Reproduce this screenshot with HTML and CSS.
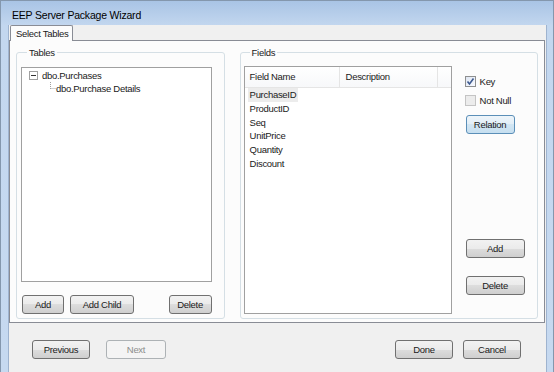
FILE: index.html
```html
<!DOCTYPE html>
<html lang="en">
<head>
    <meta charset="UTF-8">
    <meta name="viewport" content="width=device-width, initial-scale=1.0">
    <title>EEP Server Package Wizard</title>
    <link rel="stylesheet" href="styles.css">
</head>
<body>
    <div class="window">
        <div class="titlebar">EEP Server Package Wizard</div>

        <div class="client">
            <div class="tabstrip">
                <div class="tab">Select Tables</div>
            </div>

            <div class="tabpage">
                <!-- Tables group -->
                <fieldset class="group group-tables">
                    <legend>Tables</legend>
                    <div class="tree">
                        <div class="node">
                            <svg class="expander" width="9" height="9" viewBox="0 0 9 9">
                                <rect x="0.5" y="0.5" width="8" height="8" fill="#fff" stroke="#a0a0a0"/>
                                <line x1="2" y1="4.5" x2="7" y2="4.5" stroke="#333"/>
                            </svg>
                            <span>dbo.Purchases</span>
                        </div>
                        <div class="node child">
                            <svg class="branch" width="6" height="13" viewBox="0 0 6 13">
                                <line x1="0.5" y1="0" x2="0.5" y2="7" stroke="#a0a0a0" stroke-dasharray="1 1"/>
                                <line x1="0.5" y1="6.5" x2="6" y2="6.5" stroke="#a0a0a0" stroke-dasharray="1 1"/>
                            </svg>
                            <span>dbo.Purchase Details</span>
                        </div>
                    </div>
                    <div class="button-row">
                        <button class="btn btn-add">Add</button>
                        <button class="btn btn-child">Add Child</button>
                        <button class="btn btn-del">Delete</button>
                    </div>
                </fieldset>

                <!-- Fields group -->
                <fieldset class="group group-fields">
                    <legend>Fields</legend>
                    <div class="listview">
                        <div class="lv-header">
                            <span class="col col-name">Field Name</span>
                            <span class="col col-desc">Description</span>
                            <span class="col col-rest"></span>
                        </div>
                        <div class="lv-rows">
                            <div class="row"><span class="selected">PurchaseID</span></div>
                            <div class="row">ProductID</div>
                            <div class="row">Seq</div>
                            <div class="row">UnitPrice</div>
                            <div class="row">Quantity</div>
                            <div class="row">Discount</div>
                        </div>
                    </div>
                    <div class="side">
                        <label class="check">
                            <span class="box checked">
                                <svg width="9" height="9" viewBox="0 0 9 9">
                                    <path d="M1.5 4.5 L3.5 7 L7.5 1.5" fill="none" stroke="#3e5a8f" stroke-width="1.6"/>
                                </svg>
                            </span>
                            Key
                        </label>
                        <label class="check">
                            <span class="box disabled"></span>
                            Not Null
                        </label>
                        <button class="btn btn-side btn-default">Relation</button>
                        <button class="btn btn-side btn-side-add">Add</button>
                        <button class="btn btn-side btn-side-del">Delete</button>
                    </div>
                </fieldset>
            </div>

            <div class="footer">
                <button class="btn btn-nav">Previous</button>
                <button class="btn btn-nav btn-next" disabled>Next</button>
                <span class="spacer"></span>
                <button class="btn btn-nav">Done</button>
                <button class="btn btn-nav">Cancel</button>
            </div>
        </div>
    </div>
</body>
</html>
```

FILE: styles.css
```css
body {
    margin: 0;
    width: 554px;
    height: 372px;
    overflow: hidden;
    font-family: "Liberation Sans", Arial, sans-serif;
    font-size: 9.5px;
    letter-spacing: -0.3px;
    color: #1a1a1a;
}
.window {
    box-sizing: border-box;
    height: 372px;
    display: flex;
    flex-direction: column;
    padding: 0 6px 0 7px;
    border: 1px solid #8497ad;
    border-bottom: none;
    background: linear-gradient(#a9c4e5, #c3d7ef 25px, #c6d9f0);
}
.titlebar {
    height: 24px;
    line-height: 28px;
    padding-left: 4px;
    font-size: 10.5px;
    letter-spacing: -0.2px;
    color: #000;
}
.client {
    flex: 1;
    display: flex;
    flex-direction: column;
    background-color: #f0f0f0;
    border-left: 1px solid #9eb3cf;
    border-right: 1px solid #9eb3cf;
}
.tabstrip {
    height: 15px;
    display: flex;
    align-items: flex-end;
}
.tab {
    position: relative;
    box-sizing: border-box;
    height: 16px;
    width: 63px;
    margin: 0 0 -1px 1px;
    padding-left: 5px;
    line-height: 15px;
    white-space: nowrap;
    border: 1px solid #898c95;
    border-bottom: none;
    border-radius: 2px 2px 0 0;
    background-color: #fcfcfc;
}
.tabpage {
    box-sizing: border-box;
    height: 283px;
    display: flex;
    gap: 15px;
    padding: 5px 6px 3px 6px;
    margin-right: 1px;
    border: 1px solid #898c95;
    background-color: #fcfcfc;
}
.group {
    box-sizing: border-box;
    margin: 0;
    min-width: 0;
    display: flex;
    border: 1px solid #d5dfe5;
    border-radius: 3px;
}
.group legend {
    margin-left: 6px;
    padding: 0 2px;
    line-height: 13px;
}
.group-tables {
    width: 209px;
    flex-direction: column;
    padding: 8px 12px 4px 4px;
}
.group-fields {
    width: 299px;
    padding: 7px 12px 4px 3px;
}
.tree {
    flex: 1;
    border: 1px solid #a0a0a0;
    background-color: #fff;
    padding-top: 1px;
}
.node {
    display: flex;
    align-items: center;
    height: 13px;
    white-space: nowrap;
}
.expander {
    margin: 0 4px 0 7px;
}
.node.child {
    padding-left: 28px;
}
.branch {
    margin-right: 0;
    align-self: flex-start;
}
.button-row {
    display: flex;
    gap: 6px;
    margin-top: 13px;
    padding-left: 1px;
}
.btn {
    box-sizing: border-box;
    height: 19px;
    padding: 0;
    font-family: inherit;
    font-size: 9.5px;
    letter-spacing: -0.3px;
    color: #1a1a1a;
    border: 1px solid #707070;
    border-radius: 3px;
    background: linear-gradient(#f2f2f2, #ebebeb 50%, #dddddd 50%, #cfcfcf);
}
.btn-add {
    width: 42px;
}
.btn-child {
    width: 64px;
}
.btn-del {
    width: 43px;
    margin-left: auto;
}
.listview {
    width: 208px;
    box-sizing: border-box;
    display: flex;
    flex-direction: column;
    border: 1px solid #a0a0a0;
    background-color: #fff;
}
.lv-header {
    display: flex;
    height: 20px;
    line-height: 20px;
    border-bottom: 1px solid #e5e5e5;
    background: linear-gradient(#ffffff, #f7f8fa);
}
.col {
    box-sizing: border-box;
    border-right: 1px solid #e5e5e5;
}
.col-name {
    width: 95px;
    padding-left: 5px;
}
.col-desc {
    width: 98px;
    padding-left: 6px;
}
.col-rest {
    flex: 1;
    border-right: none;
}
.lv-rows {
    padding: 0 0 0 3px;
}
.row {
    height: 13.75px;
    line-height: 13.75px;
    padding-left: 2px;
}
.selected {
    display: inline-block;
    margin-left: -2px;
    padding: 0 2px;
    background-color: #ececec;
}
.side {
    flex: 1;
    display: flex;
    flex-direction: column;
    align-items: flex-start;
    padding: 9px 0 19px 13px;
}
.check {
    display: flex;
    align-items: center;
    gap: 4px;
    height: 13px;
    margin-bottom: 6px;
}
.box {
    box-sizing: border-box;
    width: 11px;
    height: 11px;
    display: flex;
    align-items: center;
    justify-content: center;
    border: 1px solid #8e8f8f;
    background: linear-gradient(135deg, #dfe6f2, #f8faff);
}
.box.disabled {
    border-color: #c4c4c4;
    background: #ececec;
}
.btn-side {
    width: 49px;
    margin-left: 1px;
}
.btn-default {
    margin-top: 2px;
    border-color: #5b8fb8;
    background: linear-gradient(#eef5fa, #e2eef7 50%, #d2e6f3 50%, #c6dff0);
}
.btn-side-add,
.btn-side-del {
    width: 59px;
}
.btn-side-add {
    margin-top: auto;
}
.btn-side-del {
    margin-top: 18px;
}
.footer {
    flex: 1;
    display: flex;
    align-items: flex-start;
    gap: 10px;
    padding: 17px 25px 0 23px;
}
.btn-nav {
    width: 58px;
}
.btn-next {
    width: 60px;
    margin-left: 6px;
    color: #8d8d8d;
    border-color: #adb2b5;
    background: #f4f4f4;
}
.spacer {
    flex: 1;
}
```
